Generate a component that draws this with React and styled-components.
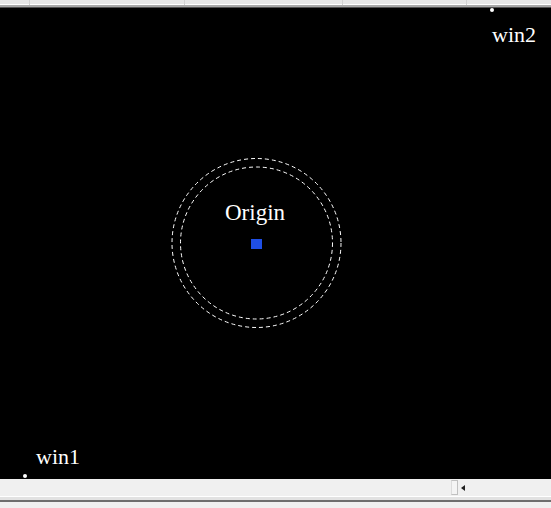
import React from "react";
import styled, { createGlobalStyle } from "styled-components";

const GlobalStyle = createGlobalStyle`
  html, body {
    margin: 0;
    padding: 0;
    background: #f0f0f0;
    overflow: hidden;
  }
  body {
    font-family: "Liberation Serif", "DejaVu Serif", serif;
  }
`;

const Window = styled.div`
  width: 551px;
  height: 508px;
  display: flex;
  flex-direction: column;
  background: #f0f0f0;
`;

const Ruler = styled.div`
  height: 8px;
  flex: none;
  display: grid;
  grid-template-columns: 30px 155px 158px 124px 1fr;
  background: linear-gradient(
    to bottom,
    #e6e6e6 0,
    #e6e6e6 4px,
    #ffffff 4px,
    #ffffff 5px,
    #a8a8a8 5px,
    #a8a8a8 7px,
    #505050 7px
  );
`;

const Segment = styled.div`
  height: 5px;
  border-right: ${p => (p.$last ? "none" : "1px solid #d2d2d2")};
`;

const Canvas = styled.div`
  height: 471px;
  flex: none;
  position: relative;
  background: #000;
  overflow: hidden;
`;

const Label = styled.span`
  position: absolute;
  left: ${p => p.$x}px;
  top: ${p => p.$y}px;
  color: #fff;
  font-family: "Liberation Serif", "DejaVu Serif", serif;
  font-size: ${p => p.$size || 22}px;
  line-height: 1;
  white-space: nowrap;
`;

const Dot = styled.span`
  position: absolute;
  left: ${p => p.$x - 2}px;
  top: ${p => p.$y - 2}px;
  width: 4px;
  height: 4px;
  border-radius: 50%;
  background: #fff;
`;

const Drawing = styled.svg`
  position: absolute;
  left: 0;
  top: 0;
`;

const ScrollBar = styled.div`
  height: 17px;
  flex: none;
  display: flex;
  align-items: center;
  background: #f0f0f0;
  border-bottom: 1px solid #ffffff;
`;

const Track = styled.div`
  width: 451px;
  flex: none;
`;

const Thumb = styled.span`
  width: 5px;
  height: 13px;
  background: #f4f4f4;
  border: 1px solid #c0c0c0;
  border-left-color: #dcdcdc;
  margin-right: 3px;
`;

const Arrow = styled.span`
  width: 0;
  height: 0;
  border-top: 3px solid transparent;
  border-bottom: 3px solid transparent;
  border-right: 4px solid #202020;
`;

const StatusStrip = styled.div`
  flex: 1;
  background: linear-gradient(
    to bottom,
    #e2e2e2 0,
    #e2e2e2 3px,
    #6e6e6e 3px,
    #6e6e6e 5px,
    #f0f0f0 5px
  );
`;

export default function App() {
  const cx = 256.5;
  const cy = 235;
  return (
    <>
      <GlobalStyle />
      <Window>
        <Ruler>
          <Segment />
          <Segment />
          <Segment />
          <Segment />
          <Segment $last />
        </Ruler>
        <Canvas>
          <Drawing width="551" height="471">
            <circle
              cx={cx}
              cy={cy}
              r="84.5"
              fill="none"
              stroke="#fff"
              strokeWidth="1"
              strokeDasharray="4 3"
            />
            <circle
              cx={cx}
              cy={cy}
              r="76"
              fill="none"
              stroke="#fff"
              strokeWidth="1"
              strokeDasharray="4 3"
            />
            <rect x="251" y="231" width="11" height="10" fill="#1f4fe6" />
          </Drawing>
          <Label $x={225} $y={193} $size={23}>Origin</Label>
          <Dot $x={492} $y={2} />
          <Label $x={492} $y={16}>win2</Label>
          <Dot $x={25} $y={468} />
          <Label $x={36} $y={438}>win1</Label>
        </Canvas>
        <ScrollBar>
          <Track />
          <Thumb />
          <Arrow />
        </ScrollBar>
        <StatusStrip />
      </Window>
    </>
  );
}
